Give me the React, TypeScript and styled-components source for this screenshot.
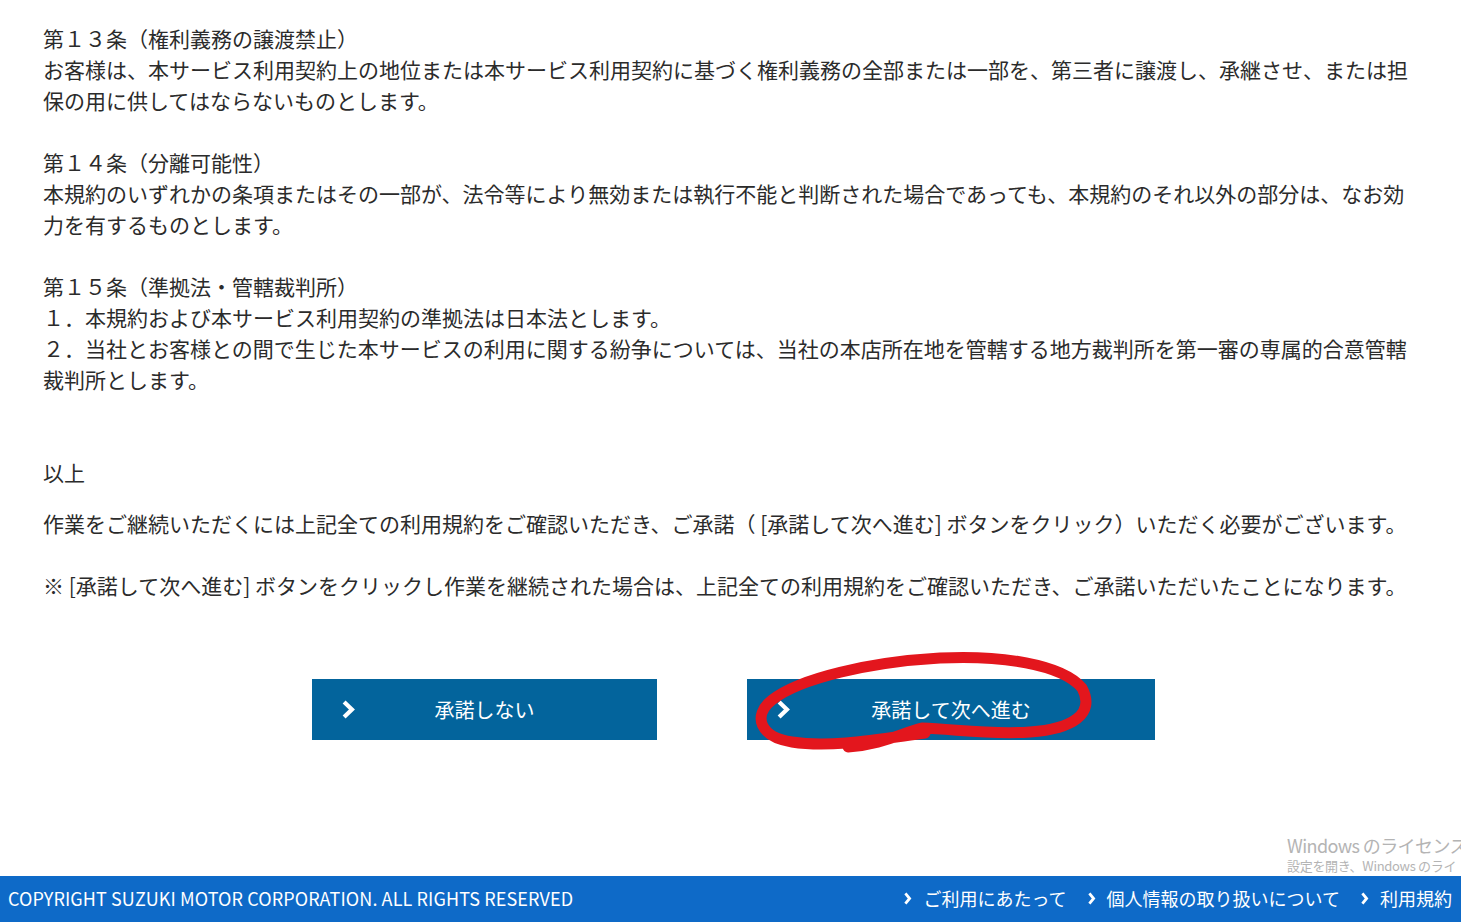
import styled, { createGlobalStyle } from 'styled-components'

const GlobalStyle = createGlobalStyle`
  html, body {
    margin: 0;
    padding: 0;
    background: #ffffff;
  }
  body {
    font-family: "Noto Sans CJK JP", "Noto Sans", sans-serif;
    color: #2b2b2b;
  }
`

const Page = styled.div`
  position: relative;
  width: 1461px;
  height: 922px;
  display: flex;
  flex-direction: column;
  overflow: hidden;
`

const Content = styled.main`
  padding: 23px 0 0 43px;
  width: 1368px;
  font-size: 21px;
  line-height: 31px;
`

const Article = styled.section`
  margin-bottom: 31px;
`

const Line = styled.p`
  margin: 0;
`

const Closing = styled.p<{ $gap: number }>`
  margin: ${props => props.$gap}px 0 0;
`

const ButtonRow = styled.div`
  display: flex;
  justify-content: center;
  gap: 90px;
  margin-top: 78px;
  padding-left: 6px;
`

const ActionButton = styled.button<{ $width: number }>`
  position: relative;
  width: ${props => props.$width}px;
  height: 61px;
  border: none;
  background: #03649c;
  color: #ffffff;
  font-family: inherit;
  font-size: 20px;
  cursor: pointer;
  display: flex;
  align-items: center;
  justify-content: center;

  svg {
    position: absolute;
    left: 29px;
    top: 20px;
  }
`

const Footer = styled.footer`
  margin-top: auto;
  height: 46px;
  background: #0e6ac8;
  color: #ffffff;
  display: flex;
  align-items: center;
  justify-content: space-between;
  padding: 0 9px 2px 8px;
  box-sizing: border-box;
`

const Copyright = styled.span`
  font-size: 18px;
  letter-spacing: 0.1px;
`

const FooterLinks = styled.nav`
  display: flex;
  gap: 20px;
`

const FooterLink = styled.a`
  display: flex;
  align-items: center;
  gap: 11px;
  color: #ffffff;
  text-decoration: none;
  font-size: 18px;
`

const Watermark = styled.div`
  position: absolute;
  left: 1287px;
  top: 833px;
  width: 174px;
  color: #b4b4b4;
  white-space: nowrap;
  overflow: hidden;
`

const WatermarkTitle = styled.div`
  font-size: 18px;
  line-height: 24px;
  letter-spacing: -0.6px;
`

const WatermarkSub = styled.div`
  font-size: 13px;
  line-height: 18px;
  letter-spacing: -0.3px;
`

const Scribble = styled.svg`
  position: absolute;
  left: 0;
  top: 0;
  pointer-events: none;
`

function Chevron({ w, h, stroke }: { w: number; h: number; stroke: number }) {
  return (
    <svg width={w} height={h} viewBox={`0 0 ${w} ${h}`}>
      <polyline
        points={`${stroke / 2 + 1},${stroke / 2 + 1} ${w - stroke / 2 - 1},${h / 2} ${stroke / 2 + 1},${h - stroke / 2 - 1}`}
        fill="none"
        stroke="#ffffff"
        strokeWidth={stroke}
        strokeLinejoin="miter"
      />
    </svg>
  )
}

const footerLinks = ['ご利用にあたって', '個人情報の取り扱いについて', '利用規約']

export default function App() {
  return (
    <Page>
      <GlobalStyle />
      <Content>
        <Article>
          <Line>第１３条（権利義務の譲渡禁止）</Line>
          <Line>
            お客様は、本サービス利用契約上の地位または本サービス利用契約に基づく権利義務の全部または一部を、第三者に譲渡し、承継させ、または担保の用に供してはならないものとします。
          </Line>
        </Article>
        <Article>
          <Line>第１４条（分離可能性）</Line>
          <Line>
            本規約のいずれかの条項またはその一部が、法令等により無効または執行不能と判断された場合であっても、本規約のそれ以外の部分は、なお効力を有するものとします。
          </Line>
        </Article>
        <Article>
          <Line>第１５条（準拠法・管轄裁判所）</Line>
          <Line>１．本規約および本サービス利用契約の準拠法は日本法とします。</Line>
          <Line>
            ２．当社とお客様との間で生じた本サービスの利用に関する紛争については、当社の本店所在地を管轄する地方裁判所を第一審の専属的合意管轄裁判所とします。
          </Line>
        </Article>
        <Closing $gap={62}>以上</Closing>
        <Closing $gap={20}>
          作業をご継続いただくには上記全ての利用規約をご確認いただき、ご承諾（ [承諾して次へ進む] ボタンをクリック）いただく必要がございます。
        </Closing>
        <Closing $gap={31}>
          ※ [承諾して次へ進む] ボタンをクリックし作業を継続された場合は、上記全ての利用規約をご確認いただき、ご承諾いただいたことになります。
        </Closing>
      </Content>

      <ButtonRow>
        <ActionButton $width={345}>
          <Chevron w={14} h={21} stroke={4.2} />
          承諾しない
        </ActionButton>
        <ActionButton $width={408}>
          <Chevron w={14} h={21} stroke={4.2} />
          承諾して次へ進む
        </ActionButton>
      </ButtonRow>

      <Footer>
        <Copyright>COPYRIGHT SUZUKI MOTOR CORPORATION. ALL RIGHTS RESERVED</Copyright>
        <FooterLinks>
          {footerLinks.map(label => (
            <FooterLink key={label} href="#">
              <Chevron w={9} h={15} stroke={2.8} />
              {label}
            </FooterLink>
          ))}
        </FooterLinks>
      </Footer>

      <Watermark>
        <WatermarkTitle>Windows のライセンス</WatermarkTitle>
        <WatermarkSub>設定を開き、Windows のライ</WatermarkSub>
      </Watermark>

      <Scribble width={1461} height={922} viewBox="0 0 1461 922">
        <path
          d="M 925 733 C 880 739, 832 748, 792 742 C 760 737, 752 716, 772 700 C 800 678, 870 662, 940 658 C 1000 655, 1062 664, 1082 688 C 1096 714, 1072 729, 1030 732 C 990 735, 955 729, 922 728 C 900 734, 880 745, 848 747"
          fill="none"
          stroke="#e3161d"
          strokeWidth={11}
          strokeLinecap="round"
          strokeLinejoin="round"
        />
      </Scribble>
    </Page>
  )
}
